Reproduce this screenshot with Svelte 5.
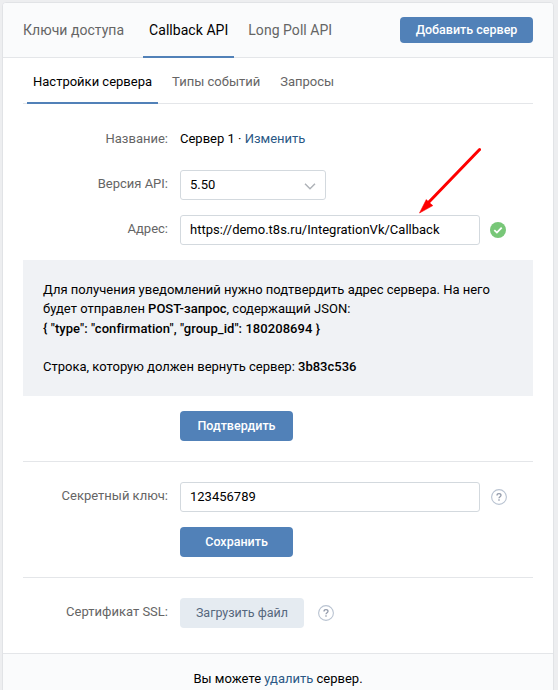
<script lang="ts">
	const tabs = ['Ключи доступа', 'Callback API', 'Long Poll API'];
	const subtabs = ['Настройки сервера', 'Типы событий', 'Запросы'];

	let activeTab = $state('Callback API');
	let activeSubtab = $state('Настройки сервера');
	let address = $state('https://demo.t8s.ru/IntegrationVk/Callback');
	let secretKey = $state('123456789');
</script>

{#snippet hint()}
	<svg class="hint" width="16" height="16" viewBox="0 0 16 16">
		<circle cx="8" cy="8" r="7.4" fill="none" stroke="#b9c3d1" stroke-width="1.1" />
		<path
			d="M6 6.4C6 5.2 6.8 4.6 8 4.6s2 .7 2 1.7c0 1.4-2 1.4-2 3"
			fill="none"
			stroke="#939bab"
			stroke-width="1.3"
		/>
		<rect x="7.3" y="10.3" width="1.4" height="1.4" fill="#939bab" />
	</svg>
{/snippet}

<div class="card">
	<header class="header">
		<nav class="tabs">
			{#each tabs as tab}
				<button type="button" class="tab" class:active={tab === activeTab} onclick={() => (activeTab = tab)}>{tab}</button>
			{/each}
		</nav>
		<button type="button" class="btn btn-small">Добавить сервер</button>
	</header>

	<div class="content">
		<nav class="subtabs">
			{#each subtabs as tab}
				<button type="button" class="subtab" class:active={tab === activeSubtab} onclick={() => (activeSubtab = tab)}>{tab}</button>
			{/each}
		</nav>

		<div class="row row-name">
			<div class="label">Название:</div>
			<div class="text">Сервер 1 · <span class="link">Изменить</span></div>
		</div>
		<div class="row">
			<div class="label">Версия API:</div>
			<div class="field select">
				<span>5.50</span>
				<svg width="12" height="8" viewBox="0 0 12 8">
					<path d="M1 1.7l5 5 5-5" fill="none" stroke="#afb3b8" stroke-width="1.5" />
				</svg>
			</div>
		</div>
		<div class="row">
			<div class="label">Адрес:</div>
			<input class="field" type="text" spellcheck="false" bind:value={address} />
			<svg class="status" width="16" height="16" viewBox="0 0 16 16">
				<circle cx="8" cy="8" r="8" fill="#78c778" />
				<path d="M4.3 8.2l2.6 2.4 4.8-4.9" fill="none" stroke="#fff" stroke-width="1.8" />
			</svg>
		</div>

		<div class="notice">
			Для получения уведомлений нужно подтвердить адрес сервера. На него<br />
			будет отправлен <b>POST-запрос</b>, содержащий JSON:<br />
			<b class="json">{'{ "type": "confirmation", "group_id": 180208694 }'}</b><br />
			<br />
			Строка, которую должен вернуть сервер: <b>3b83c536</b>
		</div>

		<div class="row">
			<div class="label"></div>
			<button type="button" class="btn">Подтвердить</button>
		</div>
		<div class="divider"></div>
		<div class="row">
			<div class="label">Секретный ключ:</div>
			<input class="field" type="text" bind:value={secretKey} />
			{@render hint()}
		</div>
		<div class="row">
			<div class="label"></div>
			<button type="button" class="btn">Сохранить</button>
		</div>
		<div class="divider"></div>
		<div class="row row-file">
			<div class="label">Сертификат SSL:</div>
			<button type="button" class="btn btn-secondary">Загрузить файл</button>
			{@render hint()}
		</div>
	</div>

	<footer class="footer">Вы можете <span class="link">удалить</span> сервер.</footer>

	<!-- pointer to the address field -->
	<svg class="arrow" width="64" height="68" viewBox="0 0 64 68">
		<path d="M62.6 3.5L11 57" fill="none" stroke="#fe0000" stroke-width="3" stroke-linecap="round" />
		<path d="M2.5 67L9.3 53.6l2.5 2.6 4 3.4z" fill="#fe0000" stroke="#fe0000" stroke-width=".6" />
	</svg>
</div>

<style>
	:global(body) {
		margin: 0;
		background: #edeef0;
		font-family: Roboto, 'Noto Sans', sans-serif;
		font-size: 13px;
		overflow: hidden;
	}
	button,
	input {
		font: inherit;
		margin: 0;
	}
	.card {
		position: relative;
		box-sizing: border-box;
		width: 552px;
		height: 700px;
		margin: 2px 0 0 2px;
		background: #fff;
		border: 1px solid #e1e3e6;
		border-radius: 4px;
		overflow: hidden;
		color: #000;
	}
	.header {
		display: flex;
		align-items: center;
		justify-content: space-between;
		height: 54px;
		padding: 0 20px 0 14px;
		background: #fafbfc;
		border-bottom: 1px solid #e4e6e9;
	}
	.tabs {
		display: flex;
		align-self: stretch;
		gap: 8px;
		margin-bottom: -1px;
	}
	.tab,
	.subtab {
		padding: 0 6px;
		background: none;
		border: none;
		border-bottom: 2px solid transparent;
		color: #656565;
		white-space: nowrap;
		cursor: pointer;
	}
	.tab {
		padding: 1px 6px 0;
		font-size: 14px;
		letter-spacing: 0.04px;
	}
	.tab:first-child {
		margin-right: 5px;
	}
	.active {
		border-bottom-color: #5181b8;
		color: #000;
	}
	.content {
		padding: 0 20px;
	}
	.subtabs {
		display: flex;
		gap: 8px;
		height: 45px;
		padding-left: 4px;
		margin-bottom: 25px;
		border-bottom: 1px solid #e4e6e9;
	}
	.subtab {
		height: 46px;
		padding-top: 3px;
	}
	.row {
		display: flex;
		align-items: center;
		height: 30px;
		margin-bottom: 15px;
	}
	.row-name {
		height: 18px;
		margin-bottom: 23px;
	}
	.row-file {
		margin-bottom: 25px;
	}
	.label {
		width: 145px;
		margin-right: 12px;
		padding-bottom: 3px;
		color: #656565;
		text-align: right;
	}
	.row-name .label {
		padding: 0;
	}
	.link {
		color: #2a5885;
	}
	.field {
		box-sizing: border-box;
		width: 300px;
		height: 30px;
		padding: 0 9px 2px;
		border: 1px solid #d3d9de;
		border-radius: 3px;
		background: #fff;
		color: #000;
		outline: none;
	}
	.select {
		display: flex;
		align-items: center;
		justify-content: space-between;
		width: 146px;
	}
	.select svg {
		margin-top: 3px;
	}
	.status {
		margin-left: 10px;
	}
	.hint {
		margin-left: 11px;
	}
	.notice {
		height: 96px;
		margin-bottom: 15px;
		padding: 20px;
		background: #f0f2f5;
		line-height: 19.3px;
		white-space: nowrap;
	}
	.notice b {
		font-weight: 500;
	}
	.notice .json {
		letter-spacing: 0.06px;
	}
	.btn {
		width: 113px;
		height: 30px;
		padding: 0 0 1px;
		border: none;
		border-radius: 4px;
		background: #5181b8;
		color: #fff;
		font-size: 12.5px;
		font-weight: 500;
		cursor: pointer;
	}
	.btn-small {
		width: 133px;
		height: 26px;
	}
	.btn-secondary {
		width: 124px;
		background: #e5ebf1;
		color: #55677d;
		font-weight: 400;
	}
	.btn-secondary + .hint {
		margin-left: 14px;
	}
	.divider {
		height: 1px;
		margin: 20px 0;
		background: #e4e6e9;
	}
	.footer {
		height: 48px;
		border-top: 1px solid #e4e6e9;
		background: #fafbfc;
		line-height: 49px;
		text-align: center;
	}
	.arrow {
		position: absolute;
		left: 414px;
		top: 143px;
	}
</style>
